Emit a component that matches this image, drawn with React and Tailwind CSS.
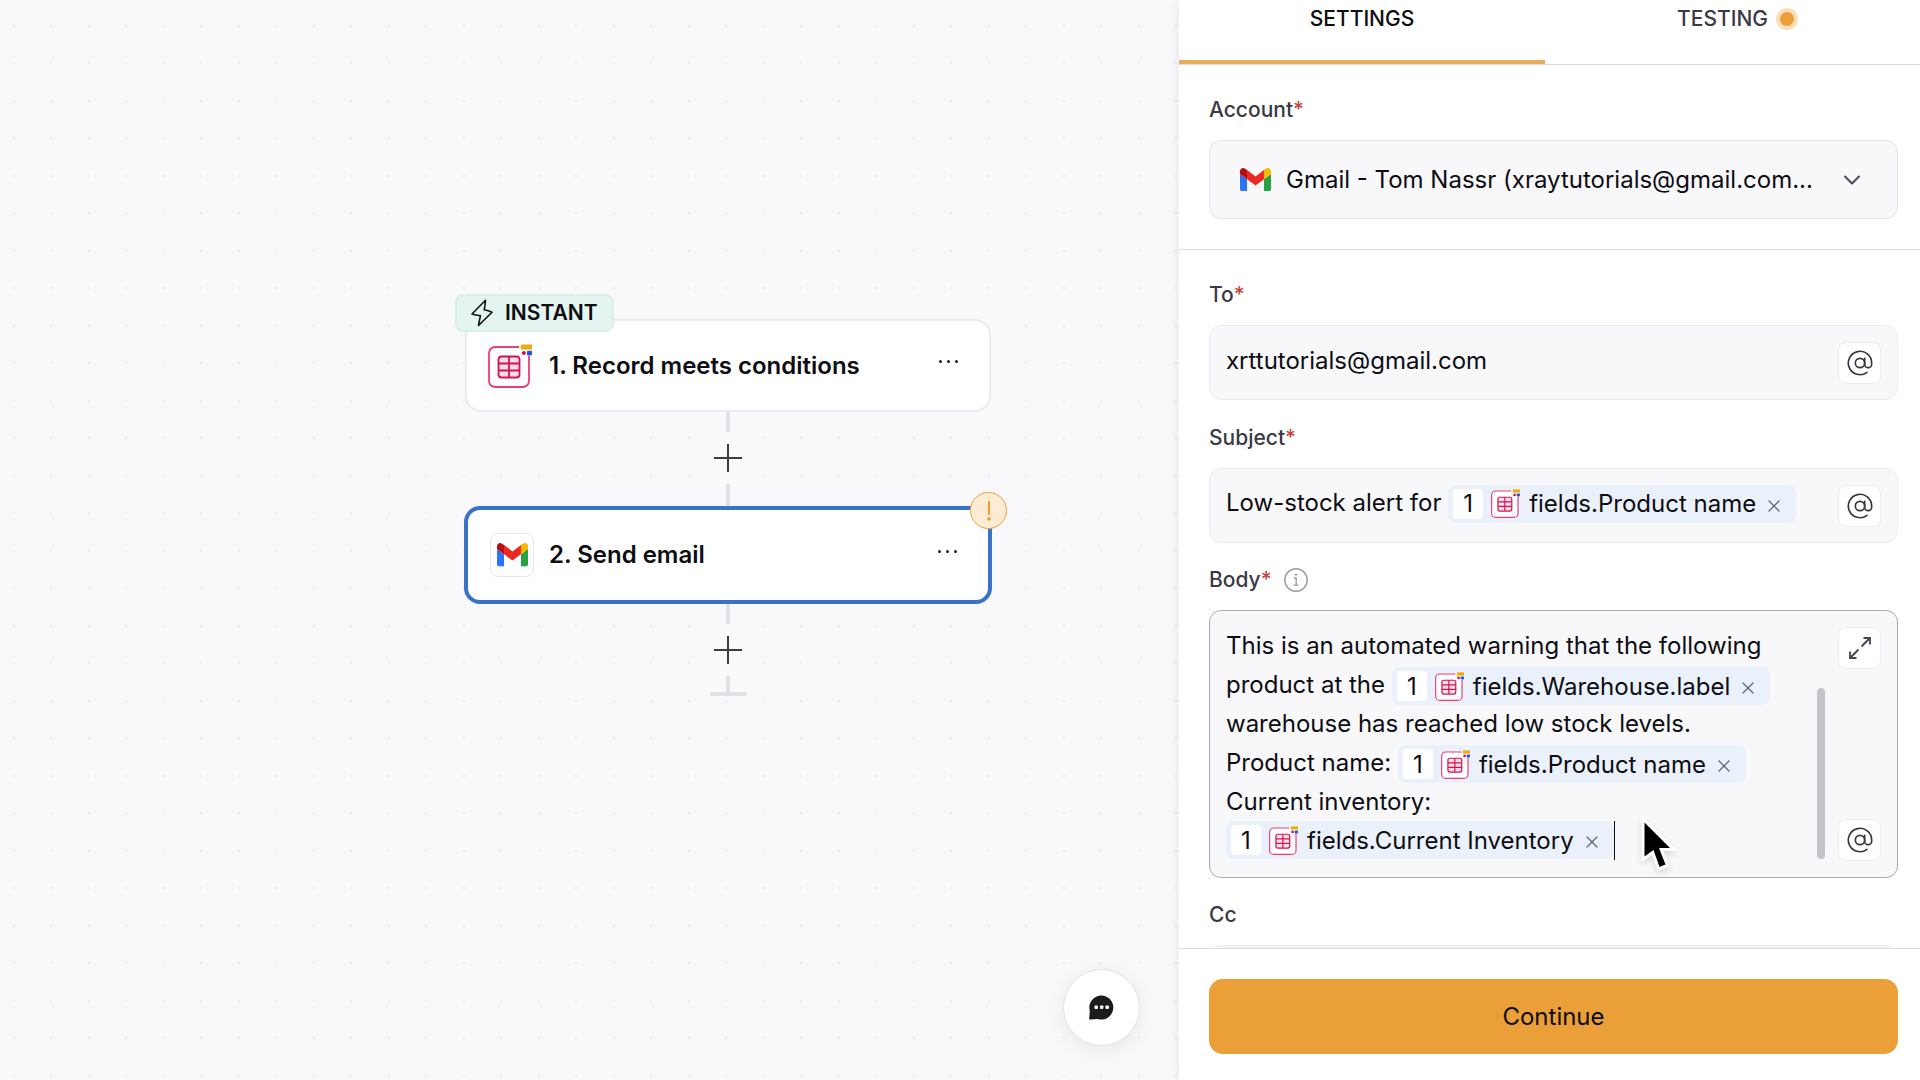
import React, { useState } from 'react';
import { AtSign, ChevronDown, X } from 'lucide-react';

const GmailIcon = ({ className }) => (
  <svg viewBox="52 42 88 66" className={className} aria-hidden="true">
    <path fill="#2a74f5" d="M58 108h14V74L52 59v43c0 3.32 2.69 6 6 6" />
    <path fill="#27a243" d="M120 108h14c3.32 0 6-2.69 6-6V59l-20 15" />
    <path fill="#fbb604" d="M120 48v26l20-15v-8c0-7.42-8.47-11.65-14.4-7.2" />
    <path fill="#ea2a22" d="M72 74V48l24 18 24-18v26L96 92" />
    <path fill="#b90d0d" d="M52 51v8l20 15V48l-5.6-4.2c-5.94-4.45-14.4-.22-14.4 7.2" />
  </svg>
);

const TableIcon = ({ className }) => (
  <svg viewBox="0 0 44 44" fill="none" className={className} aria-hidden="true">
    <rect x="1" y="3" width="40" height="40" rx="6" fill="#fff" stroke="#ea3f74" strokeWidth="1.8" />
    <rect x="31" y="0" width="13" height="12" fill="#fff" />
    <rect x="33" y="0.5" width="11" height="5" fill="#ecab13" />
    <circle cx="35.8" cy="9" r="2.1" fill="#d3174f" />
    <rect x="39" y="6.8" width="5" height="4.6" rx="1" fill="#1f55e6" />
    <rect x="10.5" y="12.5" width="21" height="21" rx="3" fill="#fbdce8" stroke="#cf1450" strokeWidth="1.8" />
    <path d="M21 12.5v21M10.5 19.5h21M10.5 26.5h21" stroke="#cf1450" strokeWidth="1.8" />
  </svg>
);

const BoltIcon = () => (
  <svg viewBox="0 0 22 28" fill="none" className="h-7 w-[22px]" aria-hidden="true">
    <path
      d="M14.5 1.2 1 15c2.8.8 5.5 1.3 8.5 1.8-.8 3.3-1.6 6.4-2 9.7L21 13.2c-2.6-1.1-5-1.8-7.8-2.4.7-3.2 1.1-6.2 1.3-9.6Z"
      stroke="#111"
      strokeWidth="1.6"
      strokeLinejoin="round"
    />
  </svg>
);

const ExpandIcon = () => (
  <svg viewBox="0 0 24 24" fill="none" stroke="#44434f" strokeWidth="1.8" className="size-6" aria-hidden="true">
    <path d="M13.5 10.5 22 2M15.5 2H22v6.500M10.500 13.500 2 22M2 15.500V22h6.500" />
  </svg>
);

const ChatIcon = () => (
  <svg viewBox="0 0 25 25" className="size-[25px]" aria-hidden="true">
    <path d="M12.5.5a12 12 0 1 1-3.6 23.5L.8 24.6c-.5 0-.7-.4-.6-.8l.6-8A12 12 0 0 1 12.5.5Z" fill="#1b1b1d" />
    <rect x="5.5" y="10.5" width="3.4" height="3.4" rx="0.8" fill="#fff" />
    <rect x="11" y="10.5" width="3.4" height="3.4" rx="0.8" fill="#fff" />
    <rect x="16.5" y="10.5" width="3.4" height="3.4" rx="0.8" fill="#fff" />
  </svg>
);

const MoreButton = () => (
  <button type="button" aria-label="More options" className="mb-2 ml-auto flex items-center gap-[5px] p-1">
    <span className="size-[3px] rounded-full bg-[#222]"></span>
    <span className="size-[3px] rounded-full bg-[#222]"></span>
    <span className="size-[3px] rounded-full bg-[#222]"></span>
  </button>
);

const Connector = ({ last }) => (
  <div className="flex flex-col items-center">
    <div className="h-5 w-1 bg-[#e0e0e6]"></div>
    <button type="button" aria-label="Add step" className="flex h-[52px] w-14 items-center justify-center bg-[#f9f9fc]">
      <svg viewBox="0 0 28 28" className="size-7" stroke="#3b3b40" strokeWidth="2" aria-hidden="true">
        <path d="M14 0v28M0 14h28" />
      </svg>
    </button>
    {last ? (
      <>
        <div className="h-4 w-1 bg-[#e0e0e6]"></div>
        <div className="h-1 w-[37px] rounded-full bg-[#e0e0e6]"></div>
      </>
    ) : (
      <div className="h-[22px] w-1 bg-[#e0e0e6]"></div>
    )}
  </div>
);

const Chip = ({ name }) => (
  <span
    contentEditable={false}
    className="inline-flex h-[38px] items-center rounded-lg bg-[#ebf1fb] pr-3 pl-[5px] align-middle whitespace-nowrap"
  >
    <span className="flex size-[30px] items-center justify-center rounded bg-white">1</span>
    <TableIcon className="ml-2 size-[29px]" />
    <span className="ml-[9px]">{name}</span>
    <button type="button" aria-label={`Remove ${name}`} className="mt-1 ml-2">
      <X className="size-5 text-[#63636e]" strokeWidth={1.5} />
    </button>
  </span>
);

const ToolButton = ({ label, children }) => (
  <button
    type="button"
    aria-label={label}
    className="flex h-[42px] w-[43px] shrink-0 items-center justify-center rounded-lg border border-[#ececf1] bg-white"
  >
    {children}
  </button>
);

const MentionButton = () => (
  <ToolButton label="Insert field">
    <AtSign className="size-7 text-[#35353f]" strokeWidth={1.4} />
  </ToolButton>
);

const Required = () => <span className="text-[#c9423f]">*</span>;

const labelStyle = 'flex h-6 items-center text-[21px]/6 font-medium text-[#3a3945]';
const fieldStyle = 'mt-[18px] flex h-[75px] items-center rounded-xl border border-[#ececf1] bg-[#f8f8fb] pr-4 pl-4 text-2xl';

const App = () => {
  const [to, setTo] = useState('xrttutorials@gmail.com');
  const [tab, setTab] = useState('settings');

  return (
    <div className="relative flex h-screen overflow-hidden bg-white font-['Inter',sans-serif] text-[#0d0d12]">
      {/* Canvas */}
      <main className="relative min-w-0 flex-1 bg-[#f9f9fc] bg-[radial-gradient(circle_at_14px_26px,#f0f0f2_1px,transparent_2px),radial-gradient(circle_at_51px_26px,#f0f0f2_1px,transparent_2px),radial-gradient(circle_at_14px_63px,#f0f0f2_1px,transparent_2px),radial-gradient(circle_at_51px_63px,#f0f0f2_1px,transparent_2px)] bg-size-[75px_75px] pt-[319px]">
        <div className="mr-[187px] ml-auto w-[528px]">
          <div className="relative mx-px flex h-[93px] items-center rounded-2xl border-2 border-[#ebebef] bg-white pr-[27px] pl-[21px]">
            <div className="absolute -top-[27px] -left-3 flex h-[38px] items-center gap-3 rounded-lg border-2 border-[#d9efe9] bg-[#e4f4f0] px-3.5 text-[21px] font-semibold">
              <BoltIcon />
              INSTANT
            </div>
            <TableIcon className="size-11" />
            <h2 className="ml-[17px] text-2xl font-semibold">1. Record meets conditions</h2>
            <MoreButton />
          </div>
          <Connector />
          <div className="relative flex h-[98px] items-center rounded-2xl border-4 border-[#3a72c8] bg-white pr-[27px] pl-[22px]">
            <div className="flex size-11 items-center justify-center rounded-lg border border-[#e6e6eb]">
              <GmailIcon className="w-[31px]" />
            </div>
            <h2 className="ml-[15px] text-2xl font-semibold">2. Send email</h2>
            <MoreButton />
            <div className="absolute -top-[18px] -right-[19px] flex size-[37px] items-center justify-center rounded-full border border-[#eba03c] bg-[#fdebd3]">
              <svg viewBox="0 0 4 20" className="h-5 w-1" aria-hidden="true">
                <path d="M2 0v14" stroke="#ef9526" strokeWidth="1.8" />
                <circle cx="2" cy="18" r="1.8" fill="#ef9526" />
              </svg>
            </div>
          </div>
          <Connector last />
        </div>
        <button
          type="button"
          aria-label="Open chat"
          className="absolute right-[39px] bottom-[34px] flex size-[77px] items-center justify-center rounded-full border border-[#e4e4e8] bg-white shadow-[0_4px_20px_rgba(0,0,0,0.08)]"
        >
          <ChatIcon />
        </button>
      </main>

      {/* Settings panel */}
      <aside className="relative flex w-[741px] shrink-0 flex-col bg-white shadow-[0_0_12px_rgba(0,0,0,0.09)]">
        <div role="tablist" className="flex h-[65px] shrink-0 border-b border-[#dddde5] text-[21px]/6 font-medium">
          <button
            type="button"
            role="tab"
            aria-selected={tab === 'settings'}
            onClick={() => setTab('settings')}
            className="flex w-[366px] justify-center border-b-4 border-[#e8ac5c] pt-[7px]"
          >
            SETTINGS
          </button>
          <button
            type="button"
            role="tab"
            aria-selected={tab === 'testing'}
            onClick={() => setTab('testing')}
            className="flex flex-1 justify-center gap-2 pt-[7px] pl-2.5 text-[#3a3945]"
          >
            TESTING
            <span className="mt-px size-[22px] rounded-full border-4 border-[#fbdfb8] bg-[#eb9f39]"></span>
          </button>
        </div>

        <form id="step-form" className="min-h-0 flex-1 overflow-hidden" onSubmit={(e) => e.preventDefault()}>
          <div className="border-b border-[#dddde5] pt-[33px] pr-[22px] pb-[30px] pl-[30px]">
            <label htmlFor="account" className={labelStyle}>Account<Required /></label>
            <div className="relative mt-[18px]">
              <GmailIcon className="absolute top-7 left-[31px] w-[31px]" />
              <select
                id="account"
                className="h-[79px] w-full appearance-none truncate rounded-xl border border-[#e4e4e8] bg-[#f8f8fb] pr-[72px] pl-[76px] text-2xl"
              >
                <option>Gmail - Tom Nassr (xraytutorials@gmail.com...</option>
              </select>
              <ChevronDown className="pointer-events-none absolute top-[26px] right-8 size-7 text-[#4c4b63]" strokeWidth={1.8} />
            </div>
          </div>

          <div className="pt-[33px] pr-[22px] pl-[30px]">
            <label htmlFor="to" className={labelStyle}>To<Required /></label>
            <div className={fieldStyle}>
              <input
                id="to"
                type="text"
                value={to}
                onChange={(e) => setTo(e.target.value)}
                className="mb-1 min-w-0 flex-1 bg-transparent outline-none"
              />
              <MentionButton />
            </div>

            <div className="mt-[26px]">
              <span id="subject-label" className={labelStyle}>Subject<Required /></span>
              <div className={fieldStyle}>
                <div
                  role="textbox"
                  aria-labelledby="subject-label"
                  contentEditable
                  suppressContentEditableWarning
                  className="mb-1 min-w-0 flex-1 outline-none"
                >
                  Low-stock alert for <Chip name="fields.Product name" />
                </div>
                <MentionButton />
              </div>
            </div>

            <div className="mt-[25px]">
              <div className="flex items-center gap-3">
                <span id="body-label" className={labelStyle}>Body<Required /></span>
                <svg viewBox="0 0 24 24" fill="none" stroke="#9b9ba4" className="size-6" aria-hidden="true">
                  <circle cx="12" cy="12" r="11.2" strokeWidth="1.5" />
                  <path d="M10 10h2.2v7M9.5 17.2h5" strokeWidth="1.3" />
                  <circle cx="12" cy="6.8" r="1.1" fill="#9b9ba4" stroke="none" />
                </svg>
              </div>
              <div className="mt-[18px] flex h-[268px] rounded-xl border border-[#a9a9b1] bg-[#f8f8fb] p-4">
                <div
                  role="textbox"
                  aria-multiline="true"
                  aria-labelledby="body-label"
                  contentEditable
                  suppressContentEditableWarning
                  className="-mt-px min-w-0 flex-1 text-2xl/[39px] outline-none"
                >
                  <p className="h-[39px]">This is an automated warning that the following</p>
                  <p className="h-[39px]">product at the <Chip name="fields.Warehouse.label" /></p>
                  <p className="h-[39px]">warehouse has reached low stock levels.</p>
                  <p className="h-[39px]">Product name: <Chip name="fields.Product name" /></p>
                  <p className="h-[39px]">Current inventory:</p>
                  <p className="flex h-[39px]">
                    <Chip name="fields.Current Inventory" />
                    <span className="h-[39px] w-px bg-[#111]"></span>
                  </p>
                </div>
                <div className="mr-[13px] mb-0.5 h-[171px] w-2 self-end rounded-full bg-[#c5c4cb]"></div>
                <div className="flex flex-col justify-between">
                  <ToolButton label="Expand editor"><ExpandIcon /></ToolButton>
                  <MentionButton />
                </div>
              </div>
            </div>

            <div className="mt-[25px]">
              <label htmlFor="cc" className={labelStyle}>Cc</label>
              <input id="cc" type="text" className="mt-[18px] h-[75px] w-full rounded-xl border border-[#ececf1] bg-[#f3f3f5] px-4 text-2xl" />
            </div>
          </div>
        </form>

        <footer className="shrink-0 border-t border-[#dddde2] pt-[30px] pr-[22px] pb-[26px] pl-[30px]">
          <button type="submit" form="step-form" className="h-[75px] w-full rounded-[14px] bg-[#eb9f39] text-2xl">
            Continue
          </button>
        </footer>
      </aside>

      {/* Mouse pointer */}
      <svg viewBox="0 0 40 60" className="pointer-events-none absolute top-[816px] left-[1640px] h-15 w-10 drop-shadow-md" aria-hidden="true">
        <path
          d="M4.5 6.5v34l9-6.500 6 17 6-2.500-6.500-16.500H30Z"
          fill="#000"
          stroke="#fff"
          strokeWidth="6"
          paintOrder="stroke"
        />
      </svg>
    </div>
  );
};

export default App;
